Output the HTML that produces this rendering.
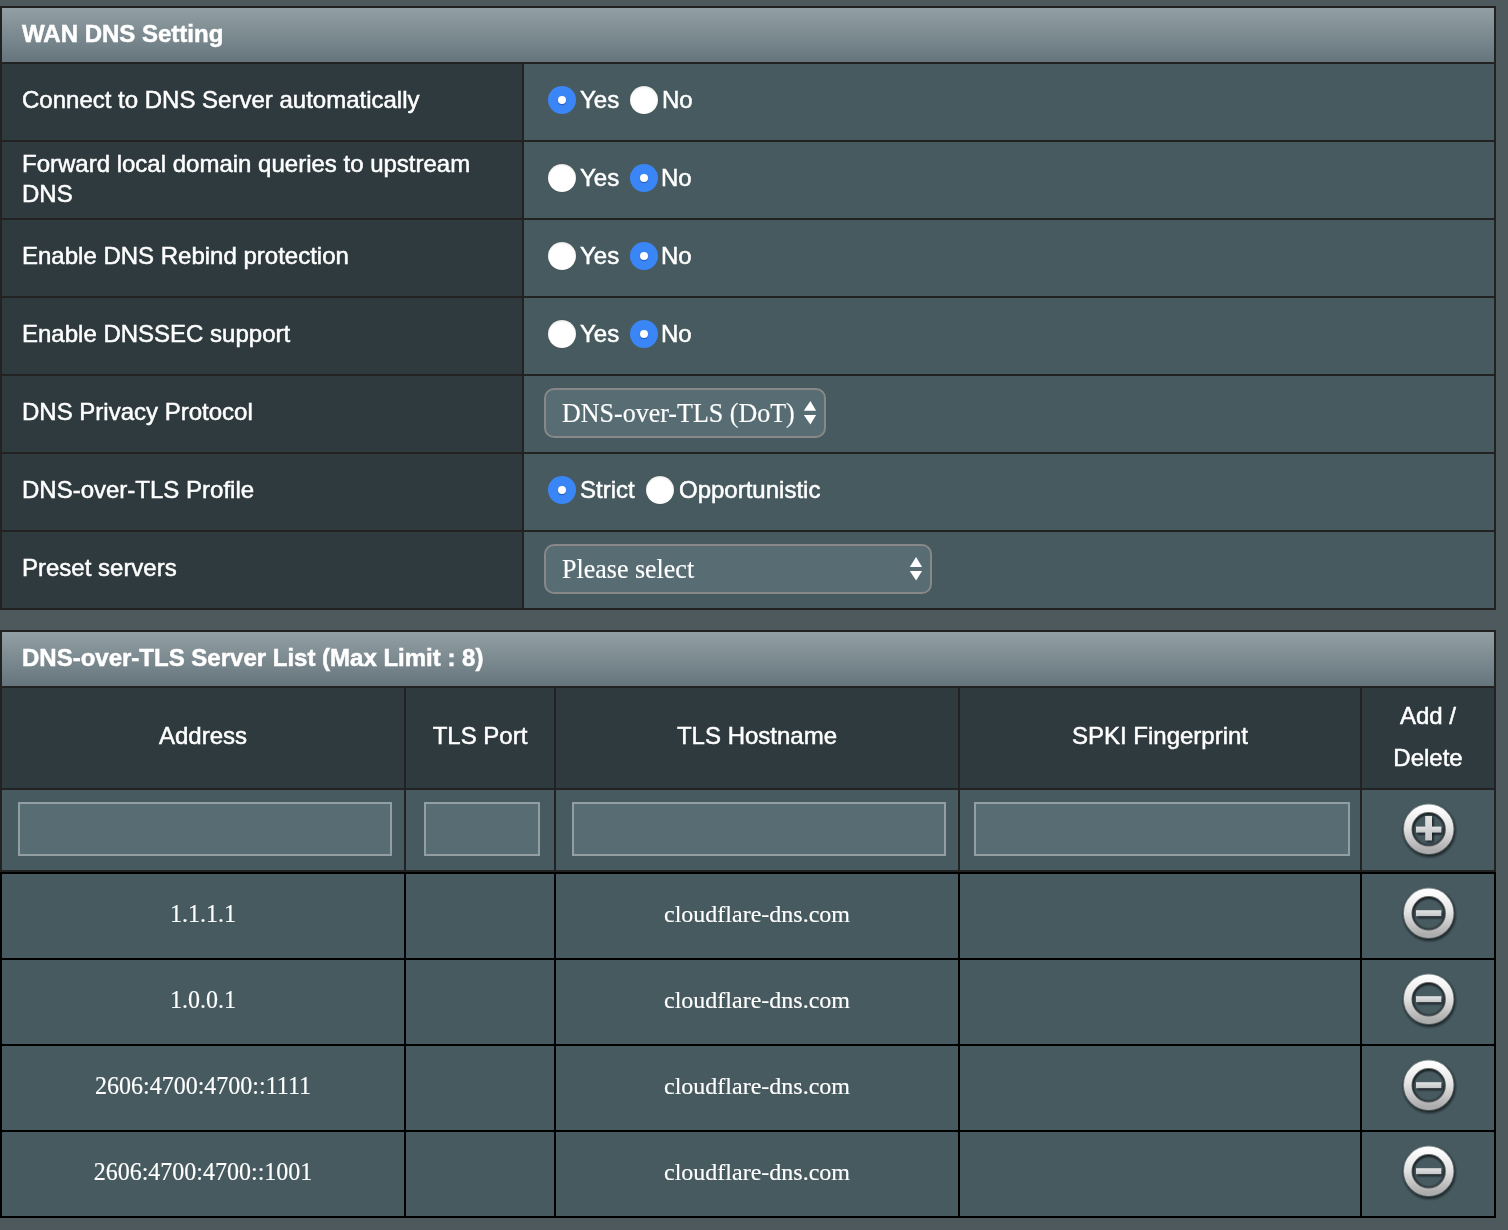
<!DOCTYPE html>
<html><head><meta charset="utf-8">
<style>
html,body{margin:0;padding:0;}
body{width:1508px;height:1230px;background:#4D595D;position:relative;overflow:hidden;font-family:"Liberation Sans",sans-serif;color:#fff;}
.a{position:absolute;}
.t{position:absolute;font-size:24px;line-height:30px;white-space:nowrap;will-change:transform;-webkit-text-stroke:0.5px #fff;}
.b{font-weight:bold;}
.c{text-align:center;}
.s{font-family:"Liberation Serif",serif;-webkit-text-stroke:0.15px #fff;}
.hd{background:linear-gradient(#92A0A5,#66757C);}
.th{background:#2F3A3E;}
.td{background:#475A5F;}
.bk{background:#222;}
.bb{background:#000;}
.inp{position:absolute;box-sizing:border-box;border:2px solid #929EA1;background:#576D73;}
.sel{position:absolute;box-sizing:border-box;border:2px solid #888;border-radius:10px;background:#576D73;}
.r{position:absolute;width:28px;height:28px;border-radius:50%;box-sizing:border-box;}
.ron{background:#3B86F7;}
.ron:after{content:"";position:absolute;left:10px;top:9.5px;width:8px;height:8px;border-radius:50%;background:#fff;box-shadow:0 1px 1px rgba(0,40,120,.5);}
.roff{background:#fff;box-shadow:inset 0 1px 2px rgba(0,0,0,.12), 0 0 1px rgba(0,0,0,.35);}
</style></head><body>
<!-- TABLE 1 -->
<div class="a bk" style="left:0;top:6px;width:1496px;height:604px;"></div>
<div class="a hd" style="left:2px;top:8px;width:1492px;height:54px;"></div>
<!-- rows -->
<div class="a th" style="left:2px;top:64px;width:520px;height:76px;"></div>
<div class="a td" style="left:524px;top:64px;width:970px;height:76px;"></div>
<div class="a th" style="left:2px;top:142px;width:520px;height:76px;"></div>
<div class="a td" style="left:524px;top:142px;width:970px;height:76px;"></div>
<div class="a th" style="left:2px;top:220px;width:520px;height:76px;"></div>
<div class="a td" style="left:524px;top:220px;width:970px;height:76px;"></div>
<div class="a th" style="left:2px;top:298px;width:520px;height:76px;"></div>
<div class="a td" style="left:524px;top:298px;width:970px;height:76px;"></div>
<div class="a th" style="left:2px;top:376px;width:520px;height:76px;"></div>
<div class="a td" style="left:524px;top:376px;width:970px;height:76px;"></div>
<div class="a th" style="left:2px;top:454px;width:520px;height:76px;"></div>
<div class="a td" style="left:524px;top:454px;width:970px;height:76px;"></div>
<div class="a th" style="left:2px;top:532px;width:520px;height:76px;"></div>
<div class="a td" style="left:524px;top:532px;width:970px;height:76px;"></div>

<div class="t b" style="left:22px;top:19px;">WAN DNS Setting</div>
<div class="t" style="left:22px;top:85px;">Connect to DNS Server automatically</div>
<div class="t" style="left:22px;top:149px;">Forward local domain queries to upstream<br>DNS</div>
<div class="t" style="left:22px;top:241px;">Enable DNS Rebind protection</div>
<div class="t" style="left:22px;top:319px;">Enable DNSSEC support</div>
<div class="t" style="left:22px;top:397px;">DNS Privacy Protocol</div>
<div class="t" style="left:22px;top:475px;">DNS-over-TLS Profile</div>
<div class="t" style="left:22px;top:553px;">Preset servers</div>

<!-- radios -->
<div class="r ron" style="left:548px;top:86px;"></div><div class="t" style="left:580px;top:85px;">Yes</div>
<div class="r roff" style="left:630px;top:86px;"></div><div class="t" style="left:662px;top:85px;">No</div>

<div class="r roff" style="left:548px;top:164px;"></div><div class="t" style="left:580px;top:163px;">Yes</div>
<div class="r ron" style="left:630px;top:164px;"></div><div class="t" style="left:661px;top:163px;">No</div>

<div class="r roff" style="left:548px;top:242px;"></div><div class="t" style="left:580px;top:241px;">Yes</div>
<div class="r ron" style="left:630px;top:242px;"></div><div class="t" style="left:661px;top:241px;">No</div>

<div class="r roff" style="left:548px;top:320px;"></div><div class="t" style="left:580px;top:319px;">Yes</div>
<div class="r ron" style="left:630px;top:320px;"></div><div class="t" style="left:661px;top:319px;">No</div>

<div class="sel" style="left:544px;top:388px;width:282px;height:50px;"></div>
<div class="t s" style="left:562px;top:399px;font-size:26px;transform:scaleY(1.05);transform-origin:0 24px;">DNS-over-TLS (DoT)</div>

<div class="r ron" style="left:548px;top:476px;"></div><div class="t" style="left:580px;top:475px;">Strict</div>
<div class="r roff" style="left:646px;top:476px;"></div><div class="t" style="left:679px;top:475px;">Opportunistic</div>

<div class="sel" style="left:544px;top:544px;width:388px;height:50px;"></div>
<div class="t s" style="left:562px;top:555px;font-size:26px;transform:scaleY(1.05);transform-origin:0 24px;">Please select</div>


<svg class="a" style="left:800px;top:398px;" width="20" height="30" viewBox="0 0 20 30"><polygon points="3.8,12.8 16.1,12.8 10.4,3.1" fill="#fff"/><polygon points="3.8,16.9 16.1,16.9 10.4,26.6" fill="#fff"/></svg>
<svg class="a" style="left:906px;top:554px;" width="20" height="30" viewBox="0 0 20 30"><polygon points="3.8,12.9 16.1,12.9 10.1,3" fill="#fff"/><polygon points="3.8,17 16.1,17 10.1,26.6" fill="#fff"/></svg>
<!-- TABLE 2 -->
<div class="a bk" style="left:0;top:630px;width:1496px;height:244px;"></div>
<div class="a hd" style="left:2px;top:632px;width:1492px;height:54px;"></div>
<div class="t b" style="left:22px;top:643px;">DNS-over-TLS Server List (Max Limit : 8)</div>

<svg width="0" height="0" style="position:absolute">
<defs>
<linearGradient id="rg" x1="0" y1="0" x2="0" y2="1"><stop offset="0" stop-color="#fdfdfd"/><stop offset="0.45" stop-color="#e4e4e4"/><stop offset="1" stop-color="#adadad"/></linearGradient>
<linearGradient id="pg" x1="0" y1="0" x2="0" y2="1"><stop offset="0" stop-color="#e2e3e4"/><stop offset="1" stop-color="#c4c6c7"/></linearGradient>
<filter id="bl" x="-20%" y="-20%" width="140%" height="140%"><feGaussianBlur stdDeviation="1"/></filter><filter id="bl3" x="-20%" y="-20%" width="140%" height="140%"><feGaussianBlur stdDeviation="0.75"/></filter><filter id="bl2" x="-20%" y="-20%" width="140%" height="140%"><feGaussianBlur stdDeviation="0.6"/></filter>
<g id="ring">
<circle cx="29.4" cy="29.8" r="21.6" fill="none" stroke="#10171a" stroke-width="9" opacity="0.8" filter="url(#bl)"/>
<circle cx="28.9" cy="28.8" r="17" fill="none" stroke="#0c1113" stroke-width="3" opacity="0.85" filter="url(#bl)"/>
<circle cx="28.7" cy="28.3" r="21" fill="none" stroke="url(#rg)" stroke-width="9.4" opacity="0.35"/><circle cx="28.7" cy="28.3" r="21" fill="none" stroke="url(#rg)" stroke-width="7.6"/>
</g>
<g id="plus">
<rect x="17.2" y="27.4" width="25.4" height="6" fill="#0c1113" opacity="0.8" filter="url(#bl)"/>
<rect x="26.6" y="16.6" width="6.8" height="24.5" fill="#0c1113" opacity="0.8" filter="url(#bl)"/>
<g filter="url(#bl3)">
<rect x="16" y="25.6" width="25.4" height="6" fill="url(#pg)"/>
<rect x="25.2" y="15" width="6.8" height="24.5" fill="url(#pg)"/>
</g>
</g>
<g id="minus">
<rect x="17.2" y="27" width="25.4" height="6" fill="#0c1113" opacity="0.8" filter="url(#bl)"/>
<rect x="16" y="25.2" width="25.4" height="6" fill="url(#pg)" filter="url(#bl3)"/>
</g>
</defs></svg>

<div class="a bb" style="left:0;top:872px;width:1496px;height:346px;"></div>
<!-- col header row -->
<div class="a th" style="left:2px;top:688px;width:402px;height:100px;"></div>
<div class="a th" style="left:406px;top:688px;width:148px;height:100px;"></div>
<div class="a th" style="left:556px;top:688px;width:402px;height:100px;"></div>
<div class="a th" style="left:960px;top:688px;width:400px;height:100px;"></div>
<div class="a th" style="left:1362px;top:688px;width:132px;height:100px;"></div>
<!-- input row -->
<div class="a td" style="left:2px;top:790px;width:402px;height:80px;"></div>
<div class="a td" style="left:406px;top:790px;width:148px;height:80px;"></div>
<div class="a td" style="left:556px;top:790px;width:402px;height:80px;"></div>
<div class="a td" style="left:960px;top:790px;width:400px;height:80px;"></div>
<div class="a td" style="left:1362px;top:790px;width:132px;height:80px;"></div>
<div class="inp" style="left:18px;top:802px;width:374px;height:54px;"></div>
<div class="inp" style="left:424px;top:802px;width:116px;height:54px;"></div>
<div class="inp" style="left:572px;top:802px;width:374px;height:54px;"></div>
<div class="inp" style="left:974px;top:802px;width:376px;height:54px;"></div>
<div class="a" style="left:1400px;top:801px;"><svg width="58" height="58" viewBox="0 0 58 58"><use href="#ring"/><use href="#plus"/></svg></div>
<div class="a td" style="left:2px;top:874px;width:402px;height:84px;"></div>
<div class="a td" style="left:406px;top:874px;width:148px;height:84px;"></div>
<div class="a td" style="left:556px;top:874px;width:402px;height:84px;"></div>
<div class="a td" style="left:960px;top:874px;width:400px;height:84px;"></div>
<div class="a td" style="left:1362px;top:874px;width:132px;height:84px;"></div>
<div class="t s c" style="left:2px;width:402px;top:899px;transform:scaleY(1.08);transform-origin:50% 23px;">1.1.1.1</div>
<div class="t s c" style="left:556px;width:402px;top:899px;">cloudflare-dns.com</div>
<div class="a" style="left:1400px;top:885px;"><svg width="58" height="58" viewBox="0 0 58 58"><use href="#ring"/><use href="#minus"/></svg></div>
<div class="a td" style="left:2px;top:960px;width:402px;height:84px;"></div>
<div class="a td" style="left:406px;top:960px;width:148px;height:84px;"></div>
<div class="a td" style="left:556px;top:960px;width:402px;height:84px;"></div>
<div class="a td" style="left:960px;top:960px;width:400px;height:84px;"></div>
<div class="a td" style="left:1362px;top:960px;width:132px;height:84px;"></div>
<div class="t s c" style="left:2px;width:402px;top:985px;transform:scaleY(1.08);transform-origin:50% 23px;">1.0.0.1</div>
<div class="t s c" style="left:556px;width:402px;top:985px;">cloudflare-dns.com</div>
<div class="a" style="left:1400px;top:971px;"><svg width="58" height="58" viewBox="0 0 58 58"><use href="#ring"/><use href="#minus"/></svg></div>
<div class="a td" style="left:2px;top:1046px;width:402px;height:84px;"></div>
<div class="a td" style="left:406px;top:1046px;width:148px;height:84px;"></div>
<div class="a td" style="left:556px;top:1046px;width:402px;height:84px;"></div>
<div class="a td" style="left:960px;top:1046px;width:400px;height:84px;"></div>
<div class="a td" style="left:1362px;top:1046px;width:132px;height:84px;"></div>
<div class="t s c" style="left:2px;width:402px;top:1071px;transform:scaleY(1.08);transform-origin:50% 23px;">2606:4700:4700::1111</div>
<div class="t s c" style="left:556px;width:402px;top:1071px;">cloudflare-dns.com</div>
<div class="a" style="left:1400px;top:1057px;"><svg width="58" height="58" viewBox="0 0 58 58"><use href="#ring"/><use href="#minus"/></svg></div>
<div class="a td" style="left:2px;top:1132px;width:402px;height:84px;"></div>
<div class="a td" style="left:406px;top:1132px;width:148px;height:84px;"></div>
<div class="a td" style="left:556px;top:1132px;width:402px;height:84px;"></div>
<div class="a td" style="left:960px;top:1132px;width:400px;height:84px;"></div>
<div class="a td" style="left:1362px;top:1132px;width:132px;height:84px;"></div>
<div class="t s c" style="left:2px;width:402px;top:1157px;transform:scaleY(1.08);transform-origin:50% 23px;">2606:4700:4700::1001</div>
<div class="t s c" style="left:556px;width:402px;top:1157px;">cloudflare-dns.com</div>
<div class="a" style="left:1400px;top:1143px;"><svg width="58" height="58" viewBox="0 0 58 58"><use href="#ring"/><use href="#minus"/></svg></div>

<div class="t c" style="left:2px;width:402px;top:721px;">Address</div>
<div class="t c" style="left:406px;width:148px;top:721px;">TLS Port</div>
<div class="t c" style="left:556px;width:402px;top:721px;">TLS Hostname</div>
<div class="t c" style="left:960px;width:400px;top:721px;">SPKI Fingerprint</div>
<div class="t c" style="left:1362px;width:132px;top:695px;line-height:42px;">Add /<br>Delete</div>
</body></html>
